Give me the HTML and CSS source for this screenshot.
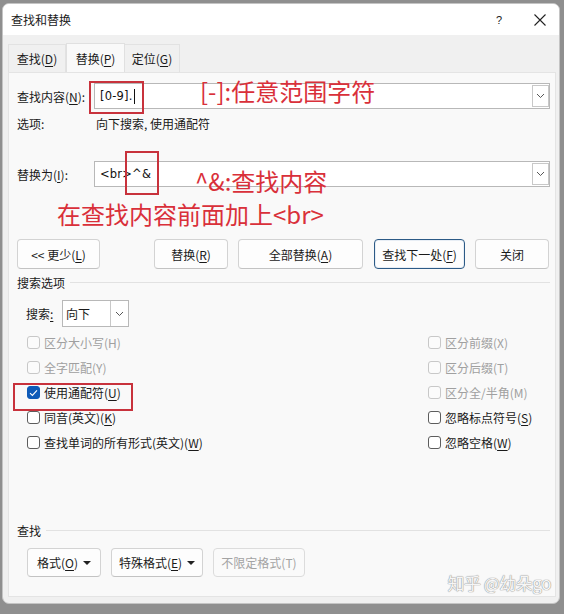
FILE: index.html
```html
<!DOCTYPE html>
<html lang="zh-CN">
<head>
<meta charset="utf-8">
<title>查找和替换</title>
<link rel="stylesheet" href="styles.css">
</head>
<body>
<div class="window">
  <div class="titlebar">
    <span class="title">查找和替换</span>
    <span class="tb-help">?</span>
    <span class="tb-close">
      <svg width="14" height="14" viewBox="0 0 14 14"><path d="M1.5 1.5 L12.5 12.5 M12.5 1.5 L1.5 12.5" stroke="#222" stroke-width="1.1" fill="none"/></svg>
    </span>
  </div>
  <div class="tabs">
    <div class="tab">查找(<u>D</u>)</div>
    <div class="tab active">替换(<u>P</u>)</div>
    <div class="tab">定位(<u>G</u>)</div>
  </div>
  <div class="panel">
    <div class="field-row r1">
      <span class="label">查找内容(<u>N</u>):</span>
      <div class="input"><span class="val">[0-9].</span><span class="caret"></span><span class="dd"><svg width="9" height="6" viewBox="0 0 9 6"><path d="M1 1 L4.5 4.5 L8 1" stroke="#444" stroke-width="0.9" fill="none"/></svg></span></div>
    </div>
    <div class="opts"><span class="label">选项:</span><span>向下搜索, 使用通配符</span></div>
    <div class="field-row r2">
      <span class="label">替换为(<u>I</u>):</span>
      <div class="input"><span class="val">&lt;br&gt;^&amp;</span><span class="dd"><svg width="9" height="6" viewBox="0 0 9 6"><path d="M1 1 L4.5 4.5 L8 1" stroke="#444" stroke-width="0.9" fill="none"/></svg></span></div>
    </div>
    <div class="btn-row">
      <button class="btn b-less">&lt;&lt; 更少(<u>L</u>)</button>
      <button class="btn b-rep">替换(<u>R</u>)</button>
      <button class="btn b-all">全部替换(<u>A</u>)</button>
      <button class="btn b-next">查找下一处(<u>F</u>)</button>
      <button class="btn b-close">关闭</button>
    </div>
    <div class="group"><span>搜索选项</span><span class="rule"></span></div>
    <div class="search-row">
      <span>搜索<u>:</u></span>
      <div class="select"><span class="sel-val">向下</span><span class="sel-dd"><svg width="9" height="6" viewBox="0 0 9 6"><path d="M1 1 L4.5 4.5 L8 1" stroke="#444" stroke-width="0.9" fill="none"/></svg></span></div>
    </div>
    <div class="checks">
      <div class="col">
        <div class="chk dis"><span class="box"></span>区分大小写(H)</div>
        <div class="chk dis"><span class="box"></span>全字匹配(Y)</div>
        <div class="chk"><span class="box on"><svg width="9" height="8" viewBox="0 0 9 8"><path d="M1 4.2 L3.4 6.4 L8 1.4" stroke="#fff" stroke-width="1.1" fill="none"/></svg></span>使用通配符(<u>U</u>)</div>
        <div class="chk"><span class="box"></span>同音(英文)(<u>K</u>)</div>
        <div class="chk"><span class="box"></span>查找单词的所有形式(英文)(<u>W</u>)</div>
      </div>
      <div class="col right">
        <div class="chk dis"><span class="box"></span>区分前缀(X)</div>
        <div class="chk dis"><span class="box"></span>区分后缀(T)</div>
        <div class="chk dis"><span class="box"></span>区分全/半角(M)</div>
        <div class="chk"><span class="box"></span>忽略标点符号(<u>S</u>)</div>
        <div class="chk"><span class="box"></span>忽略空格(<u>W</u>)</div>
      </div>
    </div>
    <div class="spacer"></div>
    <div class="group g2"><span>查找</span><span class="rule"></span></div>
    <div class="fmt-row">
      <button class="btn b-fmt">格式(<u>O</u>) <span class="tri"></span></button>
      <button class="btn b-spec">特殊格式(<u>E</u>) <span class="tri"></span></button>
      <button class="btn b-nof" disabled>不限定格式(T)</button>
    </div>
    <div class="watermark">知乎 @幼朵go</div>
  </div>

  <div class="mark box1"></div>
  <div class="mark box2"></div>
  <div class="mark box3"></div>
  <div class="note n1">[-]:任意范围字符</div>
  <div class="note n2">^&amp;:查找内容</div>
  <div class="note n3">在查找内容前面加上&lt;br&gt;</div>
</div>
</body>
</html>
```

FILE: styles.css
```css
html, body {
  margin: 0;
  padding: 0;
}
body {
  width: 564px;
  height: 614px;
  background: #8f8f8f;
  font-family: "Noto Sans CJK SC", "Noto Sans", sans-serif;
  font-size: 12px;
  color: #1a1a1a;
  overflow: hidden;
  padding-top: 3px;
  padding-left: 2px;
  box-sizing: border-box;
}
u { text-decoration: underline; text-underline-offset: 2px; }

.window {
  position: relative;
  width: 558px;
  height: 601px;
  background: #f0f0f0;
  border: 1px solid #c4c4c4;
  border-radius: 7px;
  box-sizing: border-box;
  display: flex;
  flex-direction: column;
  overflow: hidden;
}
.titlebar {
  height: 31px;
  flex: none;
  background: #ffffff;
  display: flex;
  align-items: center;
  padding-left: 8px;
}
.title { font-size: 12px; color: #1a1a1a; flex: 1; }
.tb-help {
  font-family: "Liberation Sans", sans-serif;
  font-size: 11px;
  color: #222;
  width: 20px;
  margin-right: 24px;
  text-align: center;
}
.tb-close {
  width: 14px;
  height: 14px;
  margin-right: 12px;
  display: flex;
}

.tabs {
  display: flex;
  align-items: flex-end;
  padding: 8px 0 0 5px;
  height: 37px;
  box-sizing: border-box;
  flex: none;
}
.tab {
  height: 28px;
  padding: 0;
  display: flex;
  align-items: center;
  justify-content: center;
  white-space: nowrap;
  border: 1px solid #e2e2e2;
  border-bottom: none;
  box-sizing: border-box;
  background: #f0f0f0;
  color: #1a1a1a;
}
.tab:first-child { width: 58px; }
.tab.active {
  width: 59px;
  height: 30px;
  background: #f9f9f9;
  position: relative;
  top: 1px;
  border-color: #e0e0e0;
}
.tab:last-child { width: 55px; border-left: none; }

.panel {
  position: relative;
  margin: 0 3px 6px 5px;
  flex: 1;
  background: #f9f9f9;
  border: 1px solid #e4e4e4;
  display: flex;
  flex-direction: column;
  padding: 0 5px 0 8px;
}

.field-row {
  display: flex;
  align-items: center;
  height: 26px;
}
.r1 { margin-top: 10px; }
.r2 { margin-top: 30px; }
.label { width: 77px; flex: none; white-space: nowrap; }
.input {
  flex: 1;
  height: 26px;
  background: #fff;
  border: 1px solid #b8b8b8;
  box-sizing: border-box;
  display: flex;
  align-items: center;
  padding-left: 5px;
  position: relative;
}
.val {
  font-family: "DejaVu Sans", "Liberation Sans", sans-serif;
  font-size: 11.5px;
  color: #111;
  letter-spacing: 0.2px;
}
.caret {
  width: 1px;
  height: 15px;
  background: #111;
  margin-left: 1px;
}
.dd {
  position: absolute;
  right: 0;
  top: 1px;
  width: 17px;
  height: 22px;
  border: 1px solid #c8c8c8;
  box-sizing: border-box;
  display: flex;
  align-items: center;
  justify-content: center;
  background: #fff;
}
.opts {
  display: flex;
  margin-top: 6px;
  height: 16px;
  align-items: center;
}
.opts .label { width: 79px; }

.btn-row {
  display: flex;
  margin-top: 52px;
  height: 30px;
}
.btn {
  font-family: "Noto Sans CJK SC", "Noto Sans", sans-serif;
  font-size: 12px;
  color: #1a1a1a;
  background: #fdfdfd;
  border: 1px solid #d3d3d3;
  border-bottom-color: #c3c3c3;
  border-radius: 4px;
  height: 30px;
  padding: 0;
  box-sizing: border-box;
  display: flex;
  align-items: center;
  justify-content: center;
  white-space: nowrap;
}
.b-less { width: 83px; margin-right: 54px; }
.b-rep { width: 74px; margin-right: 10px; }
.b-all { width: 125px; margin-right: 11px; }
.b-next { width: 91px; margin-right: 10px; border: 1px solid #2c5a86; box-shadow: inset 0 0 0 1px #e8eef5; }
.b-close { width: 74px; }

.group {
  display: flex;
  align-items: center;
  margin-top: 4px;
  height: 18px;
}
.group .rule {
  flex: 1;
  height: 1px;
  background: #e2e2e2;
  margin-left: 5px;
  margin-right: 0;
}
.search-row {
  display: flex;
  align-items: center;
  margin-top: 9px;
  padding-left: 9px;
  height: 27px;
}
.search-row > span:first-child { width: 36px; }
.select {
  width: 67px;
  height: 27px;
  background: #fff;
  border: 1px solid #b8b8b8;
  box-sizing: border-box;
  display: flex;
}
.sel-val { flex: 1; display: flex; align-items: center; padding-left: 3px; }
.sel-dd {
  width: 17px;
  border-left: 1px solid #c8c8c8;
  display: flex;
  align-items: center;
  justify-content: center;
}

.checks {
  display: flex;
  margin-top: 3px;
  padding-left: 10px;
}
.col { display: flex; flex-direction: column; width: 401px; }
.col.right { width: auto; }
.chk {
  height: 25px;
  display: flex;
  align-items: center;
  white-space: nowrap;
}
.box {
  width: 13px;
  height: 13px;
  border: 1px solid #5d5d5d;
  border-radius: 3px;
  box-sizing: border-box;
  margin-right: 4px;
  background: #fff;
  display: flex;
  align-items: center;
  justify-content: center;
}
.chk.dis { color: #a0a0a0; }
.chk.dis .box { border-color: #c8c8c8; background: #fbfbfb; }
.box.on { background: #0f5bb8; border-color: #0f5bb8; }

.spacer { flex: 1; }
.g2 { margin-top: 0; }
.fmt-row {
  display: flex;
  margin-top: 9px;
  padding-left: 10px;
  margin-bottom: 19px;
  height: 29px;
}
.fmt-row .btn { height: 29px; }
.b-fmt { width: 74px; margin-right: 10px; }
.b-spec { width: 92px; margin-right: 10px; }
.b-nof { width: 92px; color: #a3a3a3; background: #fafafa; border-color: #dcdcdc; }
.tri {
  display: inline-block;
  width: 0; height: 0;
  border-left: 4px solid transparent;
  border-right: 4px solid transparent;
  border-top: 4px solid #222;
  margin-left: 5px;
}
.watermark {
  position: absolute;
  right: 4px;
  bottom: 1px;
  font-size: 17px;
  color: #f6f6f6;
  text-shadow: 0 0 1px #8c8c8c, 0 0 1px #8c8c8c;
  letter-spacing: -0.5px;
}

.mark {
  position: absolute;
  border: 2px solid #c8323c;
  box-sizing: border-box;
}
.box1 { left: 86px; top: 77px; width: 55px; height: 33px; }
.box2 { left: 122px; top: 147px; width: 34px; height: 44px; }
.box3 { left: 10px; top: 379px; width: 120px; height: 28px; }
.note {
  position: absolute;
  font-family: "Noto Sans CJK SC", "Noto Sans", sans-serif;
  font-size: 24px;
  line-height: 28px;
  color: #d9303a;
  white-space: nowrap;
}
.n1 { left: 197px; top: 73px; }
.n2 { left: 192px; top: 163px; }
.n3 { left: 54px; top: 196px; }
```
